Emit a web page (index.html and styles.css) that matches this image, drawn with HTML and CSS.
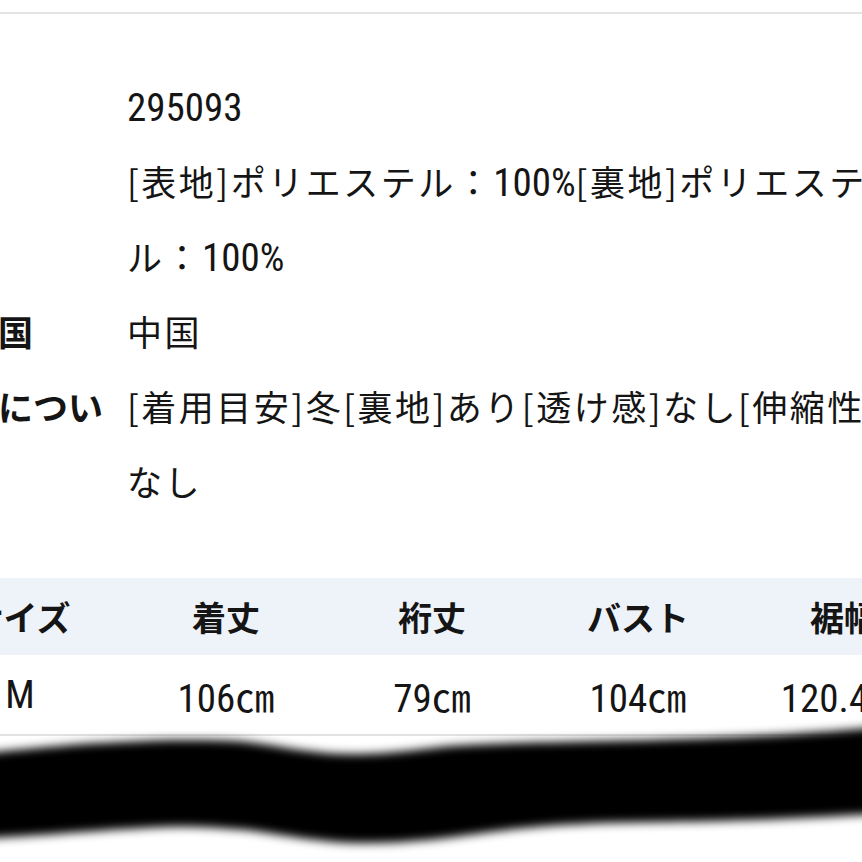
FILE: index.html
```html
<!DOCTYPE html>
<html lang="ja">
<head>
<meta charset="utf-8">
<title>商品詳細</title>
<link rel="stylesheet" href="styles.css">
</head>
<body>
<div class="page">
  <div class="topbar"></div>
  <dl class="spec">
    <div class="row"><dt>品番</dt><dd><span class="num">295093</span></dd></div>
    <div class="row"><dt>素材</dt><dd>[表地]ポリエステル：<span class="num">100%</span>[裏地]ポリエステ<br>ル：<span class="num">100%</span></dd></div>
    <div class="row"><dt>原産国</dt><dd>中国</dd></div>
    <div class="row"><dt>素材について</dt><dd>[着用目安]冬[裏地]あり[透け感]なし[伸縮性]<br>なし</dd></div>
  </dl>
  <table class="size">
    <thead>
      <tr><th>サイズ</th><th>着丈</th><th>裄丈</th><th>バスト</th><th>裾幅</th></tr>
    </thead>
    <tbody>
      <tr><td>M</td><td>106㎝</td><td>79㎝</td><td>104㎝</td><td>120.4㎝</td></tr>
    </tbody>
  </table>
  <svg class="scribble" width="862" height="162" viewBox="0 0 862 162" aria-hidden="true">
    <defs>
      <filter id="blur" x="-10%" y="-30%" width="120%" height="160%">
        <feGaussianBlur stdDeviation="5"/>
      </filter>
    </defs>
    <path filter="url(#blur)" fill="#000" d="M-30,54 C0,52 60,45 100,43 C140,41 160,40 180,40 C215,40 235,40 255,43 C285,47 320,55 360,54 C400,53 420,49 450,46 C500,43 550,42 650,40 C720,38 770,36 820,32 C850,30 870,28 900,25 L900,112 C862,115 800,118 750,120 C680,122 640,122 605,123 C550,125 520,128 490,132 C450,138 400,144 357,143 C320,142 290,136 247,130 C210,127 190,126 165,127 C120,129 80,132 40,135 C10,137 -10,138 -30,138 Z"/>
  </svg>
</div>
</body>
</html>
```
FILE: styles.css
```css
html, body {
  margin: 0;
  padding: 0;
  background: #fff;
}

.page {
  position: relative;
  width: 862px;
  height: 862px;
  overflow: hidden;
  font-family: "Noto Sans CJK JP", sans-serif;
  font-size: 35px;
  color: #151515;
}

.topbar {
  height: 12px;
  border-bottom: 2px solid #e4e4e4;
}

.spec {
  margin: 54px 0 0 -72px;
  padding: 0;
  line-height: 75px;
}

.row {
  display: grid;
  grid-template-columns: 190px 1fr;
  column-gap: 9px;
}

.row dt {
  font-weight: 700;
  margin: 0;
}

.row dd {
  margin: 0;
  white-space: nowrap;
  letter-spacing: 2.5px;
}

.num {
  font-family: Roboto, "Noto Sans CJK JP", sans-serif;
  font-stretch: 75%;
  font-size: 39px;
  line-height: 0;
  letter-spacing: 0;
}

.size {
  margin: 60px 0 0 -83px;
  border-collapse: collapse;
  table-layout: fixed;
  width: 1030px;
}

.size th, .size td {
  width: 206px;
  padding: 0;
  text-align: center;
  white-space: nowrap;
}

.size thead tr {
  background: #eef2f9;
}

.size th {
  height: 77px;
  font-weight: 700;
  font-size: 34px;
}

.size td {
  height: 79px;
  border-bottom: 2px solid #e2e2e2;
  font-family: Roboto, "Noto Sans CJK JP", sans-serif;
  font-stretch: 75%;
  font-size: 39px;
}

.scribble {
  position: absolute;
  left: 0;
  top: 700px;
}
```
